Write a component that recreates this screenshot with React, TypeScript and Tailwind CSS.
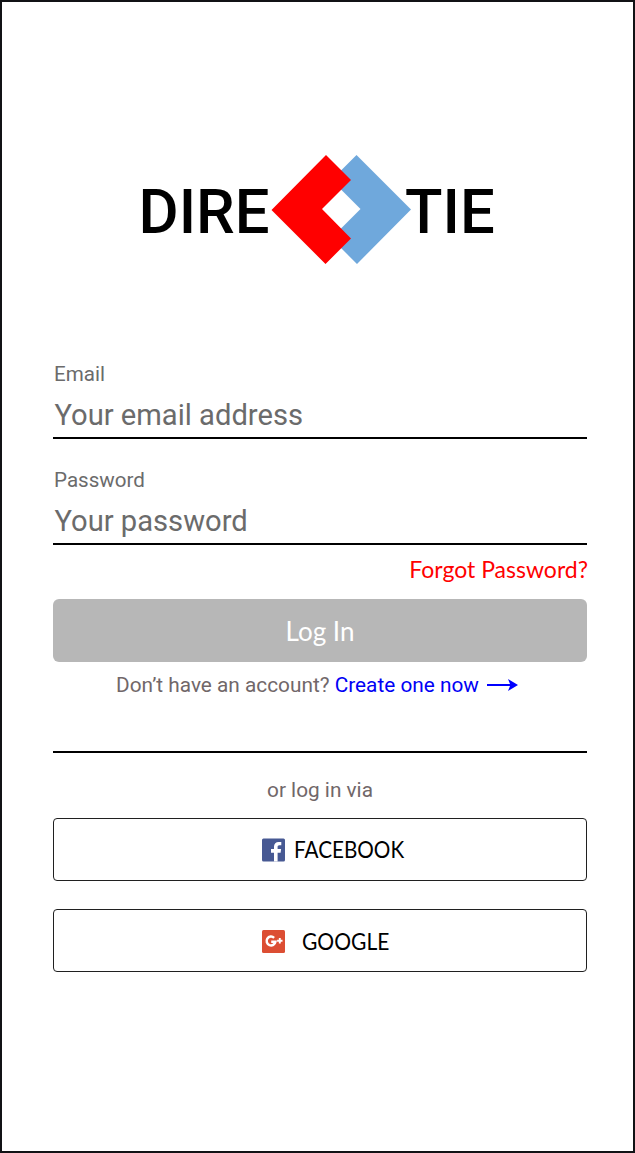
import type { ReactNode } from "react";

function Logo() {
  return (
    <div className="flex h-[110px] w-[534px] justify-start pl-[84px]">
      <span className="w-[134px] whitespace-nowrap pl-[1.500px] pt-[20px] font-['Roboto',sans-serif] text-[61.5px] font-medium leading-[74px] text-black">DIRE</span>
      <svg className="h-[110px] w-[140px] shrink-0" viewBox="271 155 140 110" aria-hidden="true">
        <path d="M356.500 155L411 209.500L357 264L341 248V228.500L360.500 209L341 189.500V170.500Z" fill="#6fa8dc" />
        <path d="M326 155L351 180L322 209L351 238.500L325.500 264L271.500 210Z" fill="#f00" />
      </svg>
      <span className="-ml-[6px] whitespace-nowrap pt-[20px] font-['Roboto',sans-serif] text-[61.5px] font-medium leading-[74px] text-black">TIE</span>
    </div>
  );
}

function Field({ label, hint }: { label: string; hint: string }) {
  return (
    <label className="flex h-[78px] flex-col border-b-2 border-black font-['Roboto',sans-serif] text-[#6b6b6b]">
      <span className="pl-px text-[20.6px] leading-[26px]">{label}</span>
      <span className="mt-[11px] pl-[1.5px] text-[29.15px] leading-[34px]">{hint}</span>
    </label>
  );
}

function SocialButton({ icon, children }: { icon: ReactNode; children: ReactNode }) {
  return (
    <button className="flex h-[63px] w-full items-center rounded-[4px] border border-[#202020] bg-white pl-[207.5px] font-['Lato',sans-serif] text-[22.5px] text-black">
      {icon}
      {children}
    </button>
  );
}

function FacebookIcon() {
  return (
    <svg className="h-6 w-6 shrink-0" viewBox="0 0 24 24" aria-hidden="true">
      <rect x="0" y=".5" width="23" height="23" rx="1.500" fill="#475993" />
      <path d="M12 23.500V14.700H9V11.100H12V8.600C12 5.500 13.900 3.900 16.600 3.900L19.300 4.100V7.300H17.400C16 7.300 15.600 8 15.600 9V11.100H19.100L18.600 14.700H15.600V23.500Z" fill="#fff" />
    </svg>
  );
}

function GoogleIcon() {
  return (
    <svg className="h-6 w-6 shrink-0" viewBox="0 0 24 24" fill="none" aria-hidden="true">
      <rect x="0" y="1" width="23" height="23" rx="1.500" fill="#dc4e33" />
      <path d="M12.100 8.800A4.400 4.400 0 1 0 13.400 12.700H9.200" stroke="#fff" strokeWidth="2.500" />
      <path d="M15.100 11.800H20.500M17.800 9.100V14.500" stroke="#fff" strokeWidth="1.900" />
    </svg>
  );
}

export default function App() {
  return (
    <main className="flex h-[1153px] w-[635px] flex-col border-2 border-[#111215] bg-white pl-[51px] pr-[46px] pt-[153px]">
      <Logo />
      <form className="mt-[96px] flex flex-col">
        <Field label="Email" hint="Your email address" />
        <div className="mt-[28px]">
          <Field label="Password" hint="Your password" />
        </div>
        <a className="-mr-px mt-[9px] self-end whitespace-nowrap font-['Lato',sans-serif] text-[23px] leading-[30px] text-[#f00]">Forgot Password?</a>
        <button type="button" className="mt-[15px] h-[63px] rounded-[6px] bg-[#b7b7b7] pt-px font-['Lato',sans-serif] text-[26px] text-white">Log In</button>
      </form>
      <p className="mt-[10px] flex items-center whitespace-pre pl-[63px] font-['Roboto',sans-serif] text-[20.8px] leading-[26px] text-[#716769]">
        <span>Don’t have an account? </span>
        <a className="text-[#0000f5]">Create one now</a>
        <svg className="ml-[8px] h-[12px] w-[31px]" viewBox="0 0 31 12" aria-hidden="true">
          <path d="M0 5H23L21 0L31 6L21 12L23 7H0Z" fill="#00f" />
        </svg>
      </p>
      <hr className="mt-[53px] border-t-2 border-black" />
      <p className="mt-[24px] text-center font-['Roboto',sans-serif] text-[20.8px] leading-[26px] text-[#716769]">or log in via</p>
      <div className="mt-[15px] flex flex-col gap-[28px]">
        <SocialButton icon={<FacebookIcon />}>
          <span className="ml-[8px] origin-left scale-x-[.92] pt-px">FACEBOOK</span>
        </SocialButton>
        <SocialButton icon={<GoogleIcon />}>
          <span className="ml-[16px] origin-left scale-x-[.935] pt-[2px]">GOOGLE</span>
        </SocialButton>
      </div>
    </main>
  );
}
